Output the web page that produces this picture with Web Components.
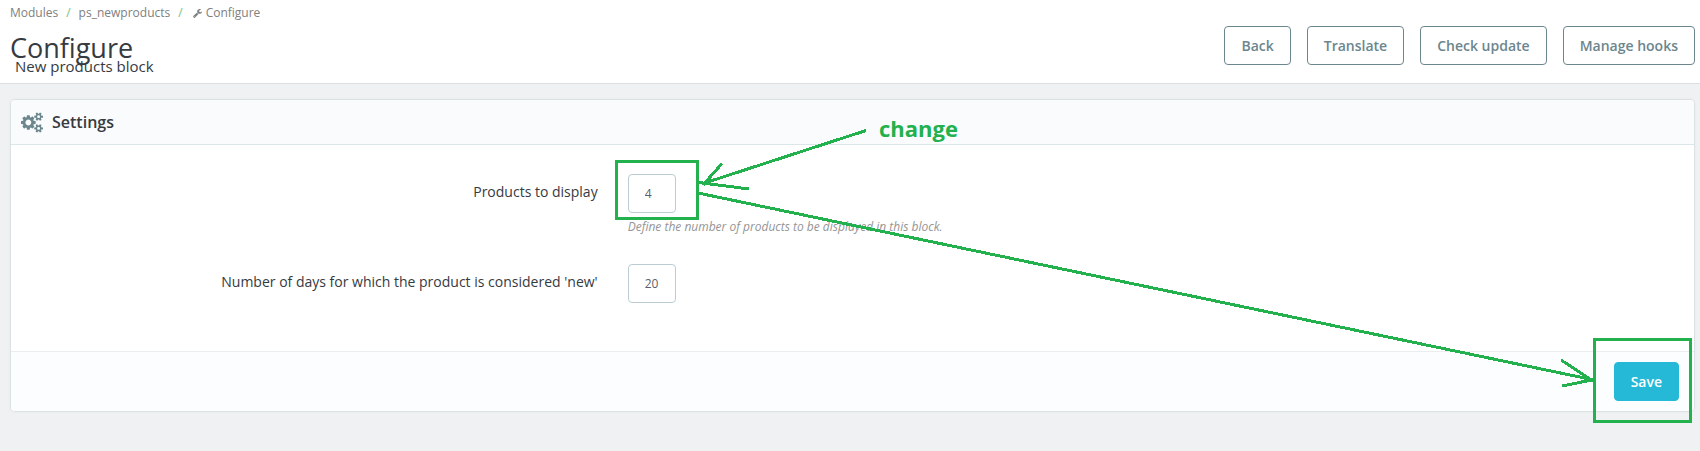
<!DOCTYPE html>
<html lang="en">
<head>
  <meta charset="utf-8">
  <title>Configure</title>
  <style>
    body {
      margin: 0;
      min-height: 100vh;
      position: relative;
      background: #eff1f2;
      color: #363a41;
      font: 14px/20px "Open Sans", "Noto Sans", sans-serif;
    }
  </style>
</head>
<body>
  <page-header heading="Configure" subtitle="New products block">
    <bread-crumb slot="breadcrumb"></bread-crumb>
    <ps-button>Back</ps-button>
    <ps-button>Translate</ps-button>
    <ps-button>Check update</ps-button>
    <ps-button>Manage hooks</ps-button>
  </page-header>

  <settings-panel heading="Settings">
    <form-field label="Products to display" value="4" help="Define the number of products to be displayed in this block."></form-field>
    <form-field label="Number of days for which the product is considered 'new'" value="20"></form-field>
    <ps-button slot="footer" variant="primary">Save</ps-button>
  </settings-panel>

  <note-layer></note-layer>

  <script>
    class PageHeader extends HTMLElement {
      constructor() {
        super();
        this.attachShadow({ mode: 'open' });
      }

      connectedCallback() {
        this.shadowRoot.innerHTML = `
          <style>
            :host {
              display: block;
              background: #fff;
              border-bottom: 1px solid #dcdfe1;
            }

            header {
              display: flex;
              justify-content: space-between;
              padding: 4px 5px 10px 10px;
            }

            h1 {
              margin: 14px 0 0;
              font-size: 27px;
              line-height: 24px;
              font-weight: 400;
            }

            p {
              margin: 0 0 0 5px;
              font-size: 15px;
              line-height: 13px;
            }

            .toolbar {
              display: flex;
              align-items: flex-start;
              gap: 16px;
              padding-top: 22px;
            }
          </style>

          <header>
            <div>
              <slot name="breadcrumb"></slot>
              <h1>${this.getAttribute('heading')}</h1>
              <p>${this.getAttribute('subtitle')}</p>
            </div>
            <div class="toolbar"><slot></slot></div>
          </header>
        `;
      }
    }

    class BreadCrumb extends HTMLElement {
      constructor() {
        super();
        this.attachShadow({ mode: 'open' });
      }

      connectedCallback() {
        this.shadowRoot.innerHTML = `
          <style>
            :host {
              display: block;
              font-size: 12px;
              line-height: 18px;
              color: #808080;
            }

            nav {
              display: flex;
              align-items: center;
              gap: 8px;
            }

            a {
              display: flex;
              align-items: center;
              gap: 4px;
              color: inherit;
              text-decoration: none;
            }

            .sep {
              color: #72c279;
            }

            svg {
              margin-left: 2px;
            }
          </style>

          <nav aria-label="Breadcrumb">
            <a href="#">Modules</a>
            <span class="sep">/</span>
            <a href="#">ps_newproducts</a>
            <span class="sep">/</span>
            <a href="#">
              <svg width="9" height="9" viewBox="0 0 1664 1664" fill="currentColor" aria-hidden="true">
                <path d="M384 1344q0-26-19-45t-45-19-45 19-19 45 19 45 45 19 45-19 19-45zm644-420l-682 682q-37 37-90 37-52 0-91-37L59 1498q-38-36-38-90 0-53 38-91l681-681q39 98 114.500 173.500T1028 924zm634-435q0 39-23 106-47 134-164.500 217.500T1216 896q-185 0-316.500-131.500T768 448t131.500-316.500T1216 0q58 0 121.500 16.500T1445 63q16 11 16 28t-16 28l-293 169v224l193 107q5-3 79-48.500t135.500-81T1630 454q15 0 23.500 10t8.500 25z"/>
              </svg>
              Configure
            </a>
          </nav>
        `;
      }
    }

    class PsButton extends HTMLElement {
      constructor() {
        super();
        this.attachShadow({ mode: 'open' });
      }

      connectedCallback() {
        const variant = this.getAttribute('variant') || 'outline';

        this.shadowRoot.innerHTML = `
          <style>
            :host {
              display: block;
            }

            button {
              display: block;
              padding: 8px 16px;
              border: 1px solid #6c868e;
              border-radius: 4px;
              background: #fff;
              color: #6c868e;
              font: inherit;
              font-weight: 600;
              line-height: 21px;
              white-space: nowrap;
              cursor: pointer;
            }

            .primary {
              border-color: #25b9d7;
              background: #25b9d7;
              color: #fff;
            }
          </style>

          <button type="button" class="${variant}"><slot></slot></button>
        `;
      }
    }

    class SettingsPanel extends HTMLElement {
      constructor() {
        super();
        this.attachShadow({ mode: 'open' });
      }

      connectedCallback() {
        this.shadowRoot.innerHTML = `
          <style>
            :host {
              display: block;
              margin: 16px 6px 40px 11px;
              border-radius: 4px;
              background: #fff;
              box-shadow: 0 0 4px 0 rgba(0, 0, 0, 0.06), 0 0 0 1px #e0e8ea;
              overflow: hidden;
            }

            h2 {
              display: flex;
              align-items: center;
              gap: 9px;
              margin: 0;
              padding: 10px;
              border-bottom: 1px solid #dbe6e9;
              background: #fafbfc;
              font-size: 16px;
              line-height: 24px;
              font-weight: 600;
            }

            h2 svg {
              color: #6c868e;
            }

            form {
              display: grid;
              gap: 29px;
              padding: 29px 124px 48px 123px;
            }

            footer {
              display: flex;
              justify-content: flex-end;
              padding: 10px 15px;
              border-top: 1px solid #eaeef0;
              background: #fcfdfe;
            }
          </style>

          <h2>
            <svg width="22" height="21" viewBox="0 0 1920 1792" fill="currentColor" aria-hidden="true">
              <path d="M896 896q0-106-75-181t-181-75-181 75-75 181 75 181 181 75 181-75 75-181zm768 512q0-52-38-90t-90-38-90 38-38 90q0 53 37.500 90.500t90.500 37.500 90.500-37.500 37.500-90.500zm0-1024q0-52-38-90t-90-38-90 38-38 90q0 53 37.500 90.500T1536 512t90.500-37.500T1664 384zm-384 421v185q0 10-7 19.500t-16 10.500l-155 24q-11 35-32 76 34 48 90 115 7 11 7 20 0 12-7 19-23 30-82.500 89.500T999 1423q-11 0-21-7l-115-90q-37 19-77 31-11 108-23 155-7 24-30 24H547q-11 0-20-7.500t-10-17.500l-23-153q-34-10-75-31l-118 89q-7 7-20 7-11 0-21-8-144-133-144-160 0-9 7-19 10-14 41-53t47-61q-23-44-35-82l-152-24q-10-1-17-9.500T0 987V802q0-10 7-19.500T23 772l155-24q11-35 32-76-34-48-90-115-7-11-7-20 0-12 7-20 22-30 82-89t79-59q11 0 21 7l115 90q34-18 77-32 11-108 23-154 7-24 30-24h186q11 0 20 7.500t10 17.500l23 153q34 10 75 31l118-89q8-7 20-7 11 0 21 8 144 133 144 160 0 8-7 19-12 16-42 54t-45 60q23 48 34 82l152 23q10 2 17 10.500t7 19.500zm640 533v140q0 16-149 31-12 27-30 52 51 113 51 138 0 4-4 7-122 71-124 71-8 0-46-47t-52-68q-20 2-30 2t-30-2q-14 21-52 68t-46 47q-2 0-124-71-4-3-4-7 0-25 51-138-18-25-30-52-149-15-149-31v-140q0-16 149-31 13-29 30-52-51-113-51-138 0-4 4-7 4-2 35-20t59-34 30-16q8 0 46 46.500t52 67.500q20-2 30-2t30 2q51-71 92-112l6-2q4 0 124 70 4 3 4 7 0 25-51 138 17 23 30 52 149 15 149 31zm0-1024v140q0 16-149 31-12 27-30 52 51 113 51 138 0 4-4 7-122 71-124 71-8 0-46-47t-52-68q-20 2-30 2t-30-2q-14 21-52 68t-46 47q-2 0-124-71-4-3-4-7 0-25 51-138-18-25-30-52-149-15-149-31V314q0-16 149-31 13-29 30-52-51-113-51-138 0-4 4-7 4-2 35-20t59-34 30-16q8 0 46 46.500t52 67.500q20-2 30-2t30 2q51-71 92-112l6-2q4 0 124 70 4 3 4 7 0 25-51 138 17 23 30 52 149 15 149 31z"/>
            </svg>
            ${this.getAttribute('heading')}
          </h2>
          <form><slot></slot></form>
          <footer><slot name="footer"></slot></footer>
        `;
      }
    }

    class FormField extends HTMLElement {
      constructor() {
        super();
        this.attachShadow({ mode: 'open' });
      }

      connectedCallback() {
        const help = this.getAttribute('help');

        this.shadowRoot.innerHTML = `
          <style>
            :host {
              display: grid;
              grid-template-columns: 1fr 2fr;
            }

            label {
              padding: 8px 15px 0;
              text-align: right;
            }

            .control {
              padding: 0 15px;
            }

            input {
              display: block;
              box-sizing: border-box;
              width: 48px;
              height: 39px;
              padding: 0 16px;
              border: 1px solid #bbcdd2;
              border-radius: 4px;
              background: #fff;
              color: #5a5f69;
              font: inherit;
              font-size: 12px;
            }

            p {
              margin: 6px 0 0;
              font-size: 12px;
              line-height: 16px;
              font-style: italic;
              color: #959595;
            }
          </style>

          <label for="field">${this.getAttribute('label')}</label>
          <div class="control">
            <input id="field" type="text" value="${this.getAttribute('value')}">
            ${help ? `<p>${help}</p>` : ''}
          </div>
        `;
      }
    }

    // Hand-drawn marks that lie over the page
    class NoteLayer extends HTMLElement {
      constructor() {
        super();
        this.attachShadow({ mode: 'open' });
      }

      connectedCallback() {
        this.shadowRoot.innerHTML = `
          <style>
            :host {
              position: absolute;
              inset: 0;
              overflow: hidden;
              pointer-events: none;
              color: #22b14c;
            }

            svg {
              display: block;
            }

            span {
              position: absolute;
              left: 879px;
              top: 112px;
              font-size: 22px;
              line-height: 32px;
              font-weight: 700;
            }
          </style>

          <svg width="1700" height="451" viewBox="0 0 1700 451" fill="none" stroke="currentColor" stroke-width="3" shape-rendering="crispEdges" aria-hidden="true">
            <rect x="616.500" y="161.500" width="81" height="57"/>
            <path d="M866 130.500L703 183.500M722 163.500L703 185M749 189L699 182.500"/>
            <path d="M698 193L1594 380M1561 360L1593 381M1562 386L1594 379.500"/>
            <rect x="1594.500" y="339.500" width="96" height="82"/>
          </svg>
          <span>change</span>
        `;
      }
    }

    customElements.define('page-header', PageHeader);
    customElements.define('bread-crumb', BreadCrumb);
    customElements.define('ps-button', PsButton);
    customElements.define('settings-panel', SettingsPanel);
    customElements.define('form-field', FormField);
    customElements.define('note-layer', NoteLayer);
  </script>
</body>
</html>
